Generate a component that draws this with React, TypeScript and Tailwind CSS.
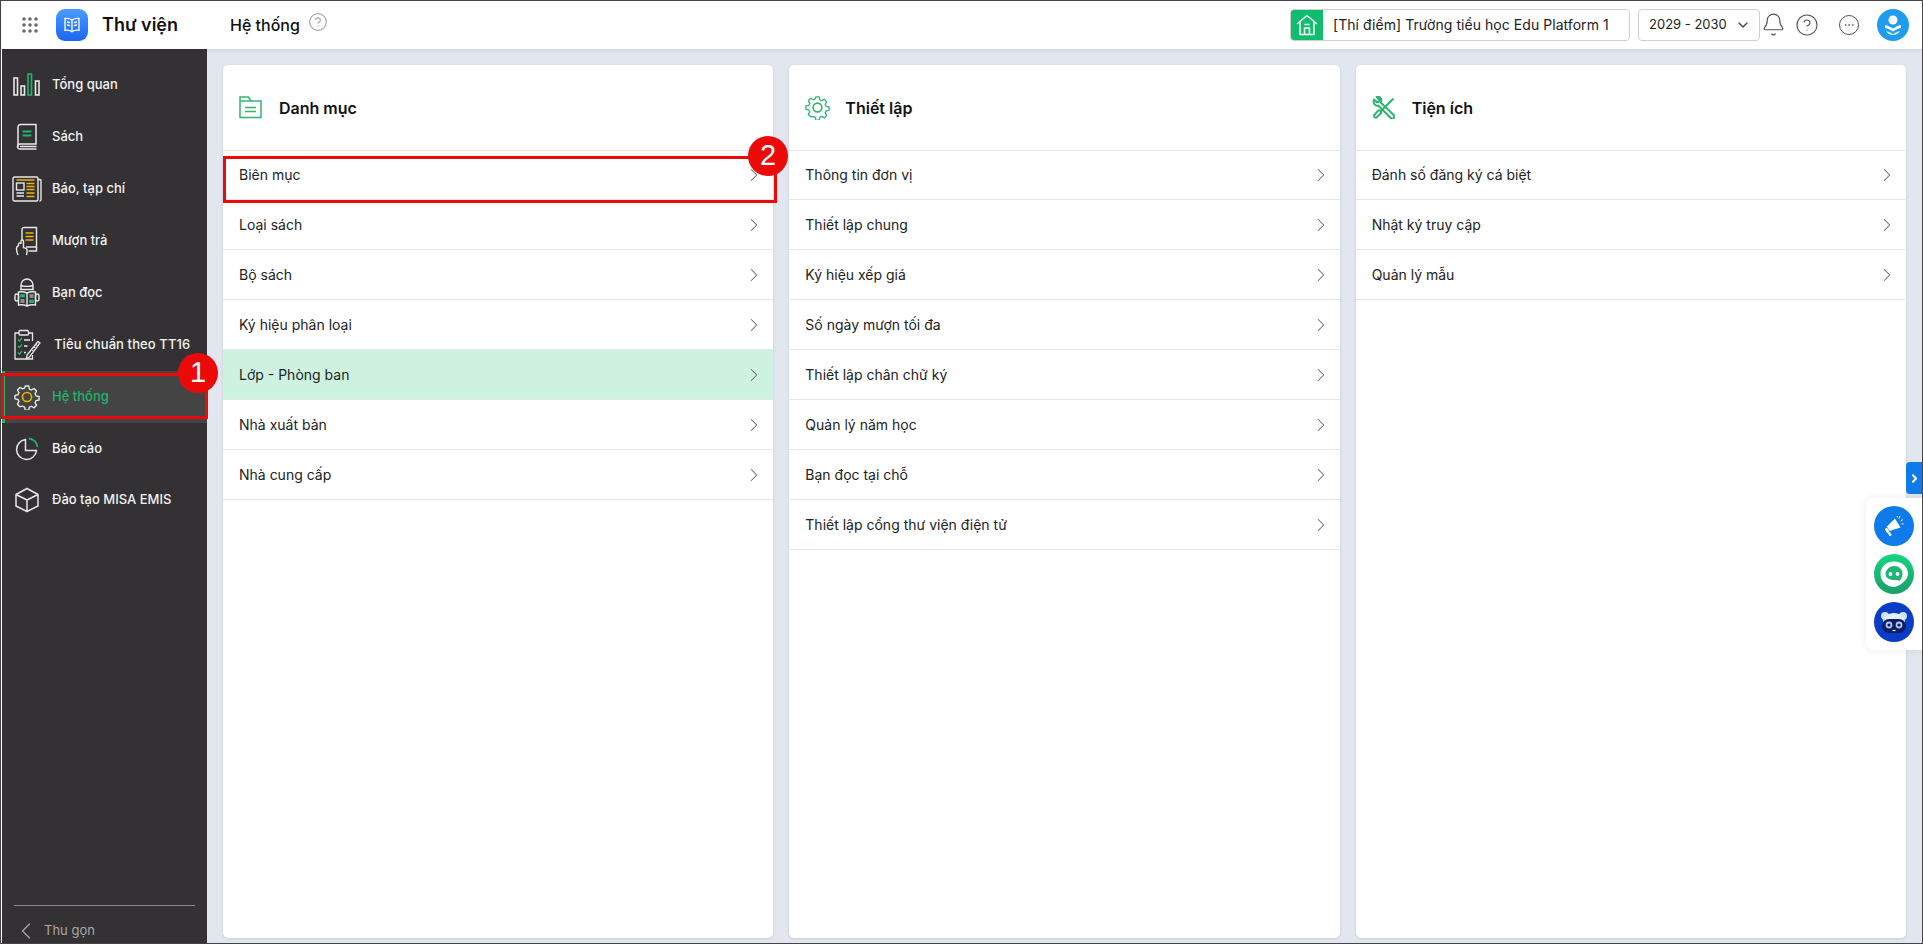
import React from 'react';
import { ChevronDown, ChevronLeft, ChevronRight, CircleHelp, Bell, Ellipsis } from 'lucide-react';

const GREEN = '#1fb56a';
const YELLOW = '#f0b400';

const AppsIcon = () => (
    <svg width="16" height="16" viewBox="0 0 16 16" fill="#6b6b6b">
        {[2, 8, 14].map((y) => [2, 8, 14].map((x) => <circle key={`${x}-${y}`} cx={x} cy={y} r="1.8" />))}
    </svg>
);

const LogoIcon = () => (
    <svg width="32" height="32" viewBox="0 0 32 32">
        <defs>
            <linearGradient id="logoBg" x1="0" y1="0" x2="0" y2="1">
                <stop offset="0" stopColor="#4d9bff" />
                <stop offset="1" stopColor="#1a66f0" />
            </linearGradient>
        </defs>
        <rect width="32" height="32" rx="9" fill="url(#logoBg)" />
        <g fill="none" stroke="#fff" strokeWidth="1.3">
            <path d="M16 11c-2-1.400-4.600-1.800-7-1.500v11.800c2.400-.3 5 .1 7 1.500 2-1.400 4.600-1.800 7-1.500V9.500c-2.400-.3-5 .1-7 1.500z" />
            <path d="M16 11v11.800M11 13l3 .7M11 16l3 .7M18 13.700l3-.7M18 16.700l3-.7" />
        </g>
    </svg>
);

const BarsIcon = () => (
    <svg width="28" height="24" viewBox="0 0 28 24" fill="none" strokeWidth="1.6">
        <g stroke="#e8e8e8">
            <rect x="1" y="5" width="3.500" height="17" />
            <rect x="8" y="13" width="3.500" height="9" />
            <rect x="22.500" y="8" width="3.500" height="14" />
        </g>
        <rect x="15" y="1" width="3.500" height="21" stroke={GREEN} />
    </svg>
);

const BookIcon = () => (
    <svg width="24" height="28" viewBox="0 0 24 28" fill="none" stroke="#e8e8e8" strokeWidth="1.5">
        <path d="M3 24V4a2.500 2.500 0 0 1 2.500-2.500H21V21H5a2.500 2.500 0 0 0 0 5h16.500" />
        <path d="M5 23.500h16.500" />
        <path d="M7.500 8.500h9M7.500 12.500h9" stroke={GREEN} strokeWidth="2" />
    </svg>
);

const NewsIcon = () => (
    <svg width="30" height="26" viewBox="0 0 30 26" fill="none" stroke="#e8e8e8" strokeWidth="1.400">
        <path d="M25.500 3.500h2.500a1 1 0 0 1 1 1v19a1.500 1.500 0 0 1-1.500 1.500" />
        <rect x="1" y="1" width="25" height="24" rx="1.500" />
        <rect x="4.500" y="7" width="7.500" height="7" />
        <path d="M4.500 17h7.500M4.500 20h7.500" />
        <path d="M4.500 4h18M14.500 7.500h8M14.500 10.500h8M14.500 13.500h8M14.500 17h8M14.500 20.500h8" stroke={YELLOW} strokeWidth="1.500" />
    </svg>
);

const BorrowIcon = () => (
    <svg width="24" height="30" viewBox="0 0 24 30" fill="none" stroke="#e8e8e8" strokeWidth="1.400">
        <path d="M7 15V3.500a2 2 0 0 1 2-2h12.500v19.500H11" />
        <path d="M21.500 21v4h-8" />
        <path d="M10.500 7h8M10.500 10.500h8M10.500 14h8" stroke={YELLOW} strokeWidth="1.600" />
        <path d="M3 29c-1-2-1.500-4-1.500-6.500 0-1.500 1-2.500 2-3v-1.500c0-1.500 2.500-1.500 2.500 0V15c0-1.500 2.500-1.500 2.500 0v6.500c1 .5 3 .5 3.500 2 .3 1.500 0 3-.5 5.500" />
    </svg>
);

const ReaderIcon = () => (
    <svg width="26" height="30" viewBox="0 0 26 30" fill="none" stroke="#e8e8e8" strokeWidth="1.400">
        <path d="M7 11V7a6 6 0 0 1 12 0v4" />
        <path d="M7 7.500c3 1.200 9 1.200 12 0M6 11.500h14" />
        <path d="M13 15c-3-1.500-6-1.500-8.500-1v13c2.500-.5 5.500-.5 8.500 1 3-1.500 6-1.500 8.500-1V14c-2.500-.5-5.500-.5-8.500 1z" />
        <path d="M13 15v13" />
        <rect x="1" y="16" width="3.500" height="7" rx="1.700" />
        <rect x="21.500" y="16" width="3.500" height="7" rx="1.700" />
        <path d="M6.500 16.500h4v2.500h-4zM15.500 22h4v2.500h-4z" fill={GREEN} stroke={GREEN} strokeWidth="0.800" />
        <path d="M15.500 17h4M15.500 19h4M6.500 22h4M6.500 24h4" strokeWidth="1.100" />
    </svg>
);

const ChecklistIcon = () => (
    <svg width="28" height="32" viewBox="0 0 28 32" fill="none" stroke="#e8e8e8" strokeWidth="1.300">
        <path d="M19.500 26v4H2V4h4M15.500 4h4v8" />
        <rect x="6" y="1.500" width="9.500" height="4.500" rx="1" />
        <path d="M5 10.500l1.500 1.500 2.500-3M5 17l1.500 1.500 2.500-3M5 23.500l1.500 1.500 2.500-3" stroke={GREEN} />
        <path d="M11 11h6M11 17h3.500M11 23.500h2" />
        <path d="M25 12.500l2 1.500-10.500 14-3 1.500.5-3.500z" />
        <path d="M23 15.500l2 1.500M21 18l2 1.500M19 21l2 1.500" strokeWidth="1" />
    </svg>
);

const GearIcon = ({ color, center, size }: { color: string; center: string; size: number }) => (
    <svg width={size} height={size} viewBox="0 0 24 24" fill="none" stroke={color} strokeWidth="1.350" strokeLinejoin="round">
        <path d="M10.300 1.500h3.400l.6 3c.7.2 1.300.5 1.900.9l2.700-1.400 2.400 2.400-1.500 2.700c.4.600.7 1.300.9 2l3 .6v3.400l-3 .6c-.2.700-.5 1.300-.9 1.900l1.500 2.700-2.400 2.400-2.700-1.500c-.6.400-1.200.7-1.900.9l-.6 3h-3.400l-.6-3c-.7-.2-1.300-.5-1.900-.9L5.100 21.600l-2.400-2.400 1.500-2.700c-.4-.6-.7-1.200-.9-1.900l-3-.6v-3.400l3-.6c.2-.7.5-1.400.9-2L2.700 5.300l2.400-2.400L7.800 4.400c.6-.4 1.200-.7 1.900-.9z" transform="translate(.6 .4) scale(.95)" />
        <circle cx="12" cy="12" r="4.200" stroke={center} strokeWidth="1.500" />
    </svg>
);

const PieIcon = () => (
    <svg width="24" height="24" viewBox="0 0 24 24" fill="none" stroke="#e8e8e8" strokeWidth="1.500">
        <path d="M10.500 2.500a10 10 0 1 0 11 11h-11z" />
        <path d="M14 1.500a9.500 9.500 0 0 1 8.500 8.500" stroke={GREEN} strokeWidth="1.800" />
    </svg>
);

const BoxIcon = () => (
    <svg width="26" height="26" viewBox="0 0 26 26" fill="none" stroke="#e8e8e8" strokeWidth="1.500" strokeLinejoin="round">
        <path d="M13 1.500l11 6v11.500l-11 5.500-11-5.500V7.500z" />
        <path d="M2 7.500l11 5.500 11-5.500M13 13v11.500" />
    </svg>
);

const FolderIcon = () => (
    <svg width="23" height="23" viewBox="0 0 23 23" fill="none" stroke="#2fb56f" strokeWidth="1.500">
        <path d="M1 21.500V1h8.500l2.500 4h10v16.500zM1 5h11" />
        <path d="M6 11.500h11M6 15.500h11" strokeWidth="1.600" />
    </svg>
);

const ToolsIcon = () => (
    <svg width="23" height="23" viewBox="0 0 23 23" fill="none" stroke="#2fb56f" strokeWidth="2" strokeLinejoin="round">
        <path d="M21.500 2.500l-12 12-3.200-.1L2 19.500A2 2 0 0 0 4 21.800l5-4.500 0-3" />
        <path d="M2 3.500l2.800 2.800 2-.6.600-2L4.600.9c2.600-.8 5 1.200 4.700 3.800-.1.700-.2 1.200-.6 1.800l13 12.500a2 2 0 0 1-3 3L6.200 9.500c-3 1.200-5.500-2.500-4.200-6z" />
    </svg>
);

const HomeIcon = () => (
    <svg width="22" height="22" viewBox="0 0 22 22" fill="none" stroke="#fff" strokeWidth="1.500" strokeLinejoin="round">
        <path d="M1 10l10-8.500L21 10" />
        <path d="M4 8v12.500h14V8" />
        <path d="M8.500 20.500V14h5v6.500M8.500 10.500h5" />
    </svg>
);

const UserAvatar = () => (
    <svg width="32" height="32" viewBox="0 0 32 32">
        <circle cx="16" cy="16" r="16" fill="#1f9cf0" />
        <circle cx="16" cy="11" r="4.500" fill="#fff" />
        <path d="M8 16c3 .5 6 2 8 3.500 2-1.500 5-3 8-3.500v3c-3 .5-6 2-8 3.500-2-1.500-5-3-8-3.500z" fill="#fff" />
        <path d="M9 22c3 .5 5 1.500 7 3 2-1.500 4-2.500 7-3-1 2.500-4 4-7 4s-6-1.500-7-4z" fill="#cfeafc" />
    </svg>
);

const MegaphoneBtn = () => (
    <svg width="40" height="40" viewBox="0 0 40 40">
        <circle cx="20" cy="20" r="20" fill="#0f7be8" />
        <path d="M21 12.500l5.500 9-11 3.500-2.500-4.500z" fill="#fff" />
        <path d="M13 21.500l2.500 4.500-2.500 1-2.300-4zM16 26l1.800 3.200-2 1-2.200-3.200z" fill="#fff" />
        <path d="M25 12.500l1-2.500M26.500 15l2.500-1.500M27.500 18l2-.2M23.500 11.500l-.3-1.500" stroke="#fff" strokeWidth="0.900" />
    </svg>
);

const ChatBtn = () => (
    <svg width="40" height="40" viewBox="0 0 40 40">
        <defs>
            <linearGradient id="chatBg" x1="0" y1="0" x2="0" y2="1">
                <stop offset="0" stopColor="#15d67f" />
                <stop offset="1" stopColor="#1c9d6c" />
            </linearGradient>
        </defs>
        <circle cx="20" cy="20" r="20" fill="url(#chatBg)" />
        <path d="M20 7.500c8.500 0 14 5.500 14 12.500 0 2.500-1.500 5-3 6.500-2.500 3-7 6-11 6.500-7 0-13.500-5.500-13.500-13C6.500 13 12 7.500 20 7.500z" fill="#fff" />
        <path d="M20 12c5 0 8.500 3.500 8.500 8 0 3.500-2 6.300-4 7.500v-1.500H20c-5 0-8.500-2.500-8.500-6S15 12 20 12z" fill="#1cb677" />
        <circle cx="16.500" cy="20" r="1.900" fill="#fff" />
        <circle cx="23.500" cy="20" r="1.900" fill="#fff" />
    </svg>
);

const RobotBtn = () => (
    <svg width="40" height="40" viewBox="0 0 40 40">
        <circle cx="20" cy="20" r="20" fill="#0a3cc8" />
        <circle cx="11" cy="14" r="4" fill="#cfe2fb" />
        <circle cx="29" cy="14" r="4" fill="#cfe2fb" />
        <path d="M9 20c0-5 5-9 11-9s11 4 11 9v4H9z" fill="#e6f0fc" />
        <rect x="8" y="17" width="24" height="14" rx="7" fill="#0b1f66" />
        <circle cx="15" cy="23" r="3.400" fill="#b4c6f0" />
        <circle cx="25" cy="23" r="3.400" fill="#b4c6f0" />
        <circle cx="15" cy="23" r="1.600" fill="#0b1f66" />
        <circle cx="25" cy="23" r="1.600" fill="#0b1f66" />
        <path d="M18.500 28.500h3" stroke="#fff" strokeWidth="1.200" />
    </svg>
);

interface NavItem {
    label: string;
    icon: React.ReactNode;
    active?: boolean;
    textClass?: string;
    rowClass?: string;
}

const navItems: NavItem[] = [
    { label: 'Tổng quan', icon: <BarsIcon /> },
    { label: 'Sách', icon: <BookIcon /> },
    { label: 'Báo, tạp chí', icon: <NewsIcon /> },
    { label: 'Mượn trả', icon: <BorrowIcon /> },
    { label: 'Bạn đọc', icon: <ReaderIcon /> },
    { label: 'Tiêu chuẩn theo TT16', icon: <ChecklistIcon />, textClass: 'ml-[2px] tracking-[0.1px]' },
    { label: 'Hệ thống', icon: <GearIcon color="#e8e8e8" center={YELLOW} size={26} />, active: true },
    { label: 'Báo cáo', icon: <PieIcon /> },
    { label: 'Đào tạo MISA EMIS', icon: <BoxIcon />, rowClass: 'h-[49px]' },
];

const Sidebar = () => (
    <aside className="flex w-[205px] shrink-0 flex-col bg-[#333134] pt-[10px]">
        {navItems.map((item) => (
            <div
                key={item.label}
                className={`flex items-center ${item.rowClass ?? 'h-[52px]'} ${item.active ? 'bg-[#444444] shadow-[inset_3px_0_0_#1fb56a]' : ''}`}
            >
                <div className="flex w-[50px] shrink-0 justify-center">{item.icon}</div>
                <span
                    className={`text-[13px] font-medium ${item.textClass ?? ''} ${item.active ? 'text-[#1fb56a]' : 'text-[#f2f2f2]'}`}
                >
                    {item.label}
                </span>
            </div>
        ))}
        <div className="mt-auto mx-3 border-t border-[#8a8a8a]" />
        <div className="flex h-[37px] items-center pl-[10px] pt-[13px] text-[13px] text-[#a8a8a8]">
            <ChevronLeft size={28} strokeWidth={1.100} />
            <span className="ml-[4px]">Thu gọn</span>
        </div>
    </aside>
);

const TopBar = () => (
    <header className="relative z-10 flex h-[48px] shrink-0 items-center bg-white pb-[1px] shadow-[0_1px_4px_rgba(0,0,0,0.12)]">
        <div className="ml-[20px]">
            <AppsIcon />
        </div>
        <div className="ml-[18px]">
            <LogoIcon />
        </div>
        <span className="ml-[14px] w-[128px] text-[18px] font-semibold text-[#111]">Thư viện</span>
        <span className="text-[16px] font-medium text-[#111]">Hệ thống</span>
        <CircleHelp size={20} strokeWidth={1.500} className="ml-[8px] mb-[6px] text-[#a8a8a8]" />
        <div className="ml-auto flex h-[32px] w-[340px] overflow-hidden rounded-[4px] border border-[#cfcfcf]">
            <div className="flex w-[32px] shrink-0 items-center justify-center bg-[#10bd6e]">
                <HomeIcon />
            </div>
            <span className="ml-[10px] self-center whitespace-nowrap text-[14px] tracking-[0.05px] text-[#222]">
                [Thí điểm] Trường tiểu học Edu Platform 1
            </span>
        </div>
        <div className="ml-[8px] flex h-[32px] w-[122px] items-center rounded-[4px] border border-[#cfcfcf] pl-[10px]">
            <span className="w-[77px] overflow-hidden whitespace-nowrap text-[13px] text-[#222]">2029 - 2030</span>
            <ChevronDown size={16} className="ml-[9px] text-[#444]" />
        </div>
        <Bell size={25} strokeWidth={1.100} className="ml-[1px] text-[#555]" />
        <CircleHelp size={24} strokeWidth={1.150} className="ml-[9px] text-[#555]" />
        <div className="ml-[20px] flex h-[20px] w-[20px] items-center justify-center rounded-full border border-[#555]">
            <Ellipsis size={12} strokeWidth={1.500} className="text-[#555]" />
        </div>
        <div className="ml-[18px] mr-[13px]">
            <UserAvatar />
        </div>
    </header>
);

interface PanelProps {
    title: string;
    icon: React.ReactNode;
    rows: string[];
    active?: string;
    titleGap: string;
}

const Panel: React.FC<PanelProps> = ({ title, icon, rows, active, titleGap }) => (
    <section className="min-w-0 flex-1 rounded-[5px] bg-white shadow-[0_1px_3px_rgba(0,0,0,0.12)]">
        <div className="flex h-[86px] items-center border-b border-[#e4e6ee] pl-4">
            {icon}
            <h2 className={`text-[16px] font-semibold text-[#111] ${titleGap}`}>{title}</h2>
        </div>
        <div className="-mt-px">
            {rows.map((row) => (
                <div
                    key={row}
                    className={`flex h-[50px] items-center justify-between border-b border-[#e4e6ee] pl-4 pr-[8px] text-[14px] text-[#222] ${row === active ? 'bg-[#cdf3e0]' : ''}`}
                >
                    <span>{row}</span>
                    <ChevronRight size={22} strokeWidth={1.100} className="text-[#666]" />
                </div>
            ))}
        </div>
    </section>
);

const RedBadge = ({ n, className }: { n: number; className: string }) => (
    <div
        className={`absolute z-30 flex h-[40px] w-[40px] items-center justify-center rounded-full bg-[#ec0909] text-[29px] text-white font-['Liberation_Sans',sans-serif] ${className}`}
    >
        {n}
    </div>
);

export default function App() {
    return (
        <div className="relative flex h-screen w-full flex-col overflow-hidden border border-[#444] bg-white pl-[1px] font-['Inter',sans-serif]">
            <TopBar />
            <div className="flex min-h-0 flex-1 bg-[#e2e7ef]">
                <Sidebar />
                <main className="flex min-w-0 flex-1 gap-4 pl-4 pr-4 pt-4 pb-[5px]">
                    <Panel
                        title="Danh mục"
                        icon={<FolderIcon />}
                        titleGap="ml-[17px]"
                        rows={['Biên mục', 'Loại sách', 'Bộ sách', 'Ký hiệu phân loại', 'Lớp - Phòng ban', 'Nhà xuất bản', 'Nhà cung cấp']}
                        active="Lớp - Phòng ban"
                    />
                    <Panel
                        title="Thiết lập"
                        icon={<GearIcon color="#2fb56f" center="#2fb56f" size={25} />}
                        titleGap="ml-[15px]"
                        rows={[
                            'Thông tin đơn vị',
                            'Thiết lập chung',
                            'Ký hiệu xếp giá',
                            'Số ngày mượn tối đa',
                            'Thiết lập chân chữ ký',
                            'Quản lý năm học',
                            'Bạn đọc tại chỗ',
                            'Thiết lập cổng thư viện điện tử',
                        ]}
                    />
                    <Panel
                        title="Tiện ích"
                        icon={<ToolsIcon />}
                        titleGap="ml-[17px]"
                        rows={['Đánh số đăng ký cá biệt', 'Nhật ký truy cập', 'Quản lý mẫu']}
                    />
                </main>
            </div>

            {/* annotation boxes over the page */}
            <div className="absolute left-0 top-[372px] z-20 h-[46px] w-[207px] border-[3px] border-[#ec0909]" />
            <div className="absolute left-[222px] top-[155px] z-20 h-[47px] w-[554px] border-[3px] border-[#ec0909]" />
            <RedBadge n={1} className="left-[177px] top-[352px]" />
            <RedBadge n={2} className="left-[747px] top-[135px]" />

            {/* floating side widgets */}
            <div className="absolute right-0 top-[461px] flex h-[32px] w-[16px] items-center justify-center rounded-l-[4px] bg-[#0f7be8]">
                <ChevronRight size={13} strokeWidth={3.500} className="text-white" />
            </div>
            <div className="absolute right-0 top-[497px] flex w-[56px] flex-col items-center gap-[8px] rounded-l-[8px] bg-white py-[8px] shadow-[0_0_10px_rgba(0,0,0,0.08)]">
                <MegaphoneBtn />
                <ChatBtn />
                <RobotBtn />
            </div>
        </div>
    );
}
